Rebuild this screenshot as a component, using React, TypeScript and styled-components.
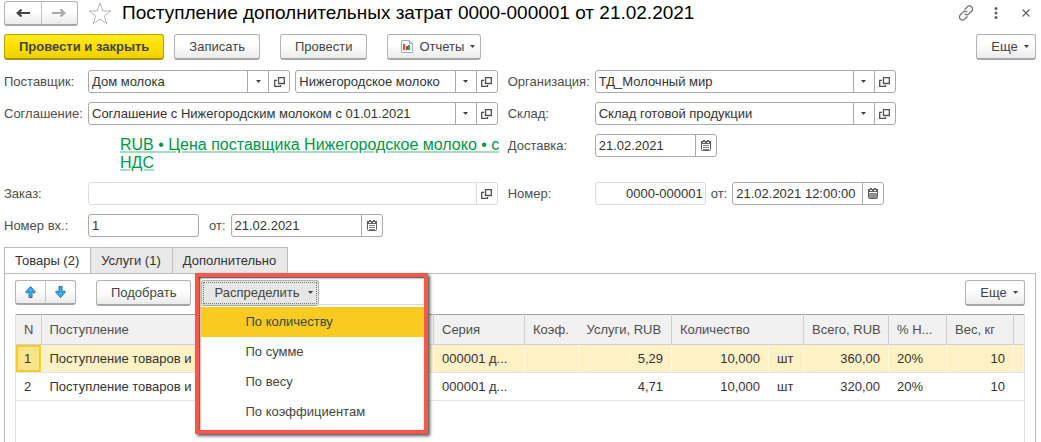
import React from "react";
import styled, { createGlobalStyle, css } from "styled-components";

const GlobalStyle = createGlobalStyle`
  *, *::before, *::after { box-sizing: border-box; }
  body {
    margin: 0;
    background: #fff;
    color: #333;
    font-family: "Liberation Sans", Arial, sans-serif;
    font-size: 13px;
    line-height: 16px;
  }
  button, input { font: inherit; color: inherit; margin: 0; }
`;

const Page = styled.main`
  display: flex;
  flex-direction: column;
  min-height: 100vh;
  padding: 0 5px 0 4px;
`;

const Header = styled.header`
  display: flex;
  align-items: center;
  height: 26px;
  margin-right: -5px;
`;

const raised = css`
  border: 1px solid #b3b3b3;
  border-bottom: 2px solid #a6a6a6;
  border-radius: 3px;
  background: linear-gradient(#fff 40%, #ebebeb);
`;

const SplitButton = styled.div<{ $wide?: boolean }>`
  ${raised}
  display: flex;
  flex: none;
  width: ${(p) => (p.$wide ? 74 : 61)}px;
  height: 25px;
  button {
    display: flex;
    flex: 1;
    align-items: center;
    justify-content: center;
    padding: 0;
    border: 0;
    background: none;
  }
  button + button { border-left: 1px solid #c4c4c4; }
`;

const IconButton = styled.button`
  display: flex;
  flex: none;
  align-items: center;
  justify-content: center;
  width: 30px;
  height: 24px;
  padding: 0;
  border: 0;
  background: none;
`;

const StarButton = styled(IconButton)`
  width: 44px;
`;

const Title = styled.h1`
  flex: 1;
  margin: 0;
  color: #000;
  font-size: 19px;
  font-weight: 400;
  line-height: 24px;
  white-space: nowrap;
`;

const CommandBar = styled.div`
  display: flex;
  gap: 20px;
  margin-top: 8px;
`;

const ButtonGroup = styled.div`
  display: flex;
  gap: 10px;
`;

const Spacer = styled.div`
  flex: 1;
`;

const Button = styled.button<{ $primary?: boolean; $pressed?: boolean }>`
  ${raised}
  display: flex;
  flex: none;
  align-items: center;
  justify-content: center;
  gap: 8px;
  height: 26px;
  padding: 0 14px;
  color: #444;
  white-space: nowrap;
  ${(p) =>
    p.$primary &&
    css`
      border-color: #b5a200;
      border-bottom-color: #a39200;
      background: linear-gradient(#ffe91f, #ffe000 50%, #edd000);
      font-weight: 700;
    `}
  ${(p) =>
    p.$pressed &&
    css`
      padding: 0 5px 0 12px;
      background: #e6e6e6;
      outline: 1px dotted #777;
      outline-offset: -3px;
    `}
`;

const MenuButton = styled(Button)`
  gap: 6px;
  padding: 0 5px 0 13px;
`;

const MoreButton = styled(MenuButton)`
  width: 60px;
`;

const Form = styled.form`
  display: grid;
  grid-template-columns: minmax(0, 56fr) minmax(0, 44fr);
  gap: 9px 10px;
  margin: 10px 0;
  padding-right: 13.6%;
`;

const FormRow = styled.div<{ $side?: "right" }>`
  display: flex;
  align-items: flex-start;
  gap: 5px;
  > :first-child { width: ${(p) => (p.$side === "right" ? 82 : 79)}px; }
`;

const Label = styled.label`
  flex: none;
  color: #4d4d4d;
  line-height: 23px;
  white-space: nowrap;
`;

const InnerLabel = styled(Label)`
  padding-left: 5px;
`;

const FieldBox = styled.div<{ $width?: number; $faint?: boolean }>`
  --line: ${(p) => (p.$faint ? "#dcdcdc" : "#a9a9a9")};
  display: flex;
  flex: ${(p) => (p.$width ? `0 0 ${p.$width}px` : "1 1 0")};
  min-width: 0;
  height: 23px;
  border: 1px solid var(--line);
  border-radius: 3px;
  background: #fff;
  input {
    flex: 1;
    min-width: 0;
    padding: 0 3px;
    border: 0;
    background: none;
    line-height: 16px;
  }
  button {
    display: flex;
    flex: none;
    align-items: center;
    justify-content: center;
    width: 21px;
    padding: 0;
    border: 0;
    border-left: 1px solid var(--line);
    background: none;
  }
`;

const NumberField = styled(FieldBox)`
  input { text-align: right; padding-right: 2px; }
`;

const TermsLink = styled.a`
  flex: 1;
  margin-left: 32px;
  margin-right: -4px;
  height: 39px;
  padding-top: 2px;
  color: #009646;
  font-size: 16px;
  line-height: 18px;
  text-decoration: underline;
  text-decoration-color: #a8dcbf;
  text-decoration-thickness: 2px;
  text-underline-offset: 1px;
`;

const Tabs = styled.div`
  display: flex;
  height: 27px;
  margin-bottom: -1px;
`;

const Tab = styled.button<{ $active?: boolean }>`
  padding: 0 11px 0 10px;
  border: 1px solid #bdbdbd;
  border-left-width: ${(p) => (p.$active ? 1 : 0)}px;
  border-bottom-color: ${(p) => (p.$active ? "#fff" : "#bdbdbd")};
  background: ${(p) => (p.$active ? "#fff" : "#e9e9e9")};
  white-space: nowrap;
`;

const Panel = styled.section`
  display: flex;
  flex: 1;
  flex-direction: column;
  padding: 6px 10px 0;
  border: 1px solid #bdbdbd;
  border-bottom: 0;
`;

const Toolbar = styled.div`
  display: flex;
  margin-bottom: 8px;
  gap: 20px;
`;

const MenuAnchor = styled.div`
  position: relative;
`;

const Frame = styled.div`
  position: absolute;
  z-index: 1;
  top: -7px;
  left: -6px;
  width: 233px;
  height: 161px;
  border: 4px solid #f9574a;
  background: #fff;
  box-shadow: 2px 2px 3px #555, inset 1px 1px 2px #333;
`;

const DistributeButton = styled(Button)`
  position: relative;
  z-index: 2;
`;

const Menu = styled.ul`
  position: absolute;
  z-index: 2;
  top: 24px;
  left: 0;
  width: 223px;
  margin: 0;
  padding: 2px 0 0;
  border-top: 1px solid #d8d8d8;
  list-style: none;
`;

const MenuItem = styled.button<{ $active?: boolean }>`
  display: block;
  width: 100%;
  height: 30px;
  padding: 0 0 0 44px;
  border: 0;
  background: ${(p) => (p.$active ? "#f9cb20" : "transparent")};
  color: #444;
  text-align: left;
`;

const TableArea = styled.div`
  flex: 1;
  border: 1px solid #e0e0e0;
  border-width: 0 1px;
`;

const Table = styled.table`
  width: 100%;
  border-collapse: collapse;
  table-layout: fixed;
`;

const HeadCell = styled.th<{ $noLine?: boolean }>`
  height: 30px;
  padding: 0 8px;
  overflow: hidden;
  border-top: 1px solid #a0a0a0;
  border-bottom: 1px solid #d0d0d0;
  border-right: ${(p) => (p.$noLine ? "0" : "1px solid #cfcfcf")};
  background: #f1f1f1;
  color: #4d4d4d;
  font-weight: 400;
  text-align: left;
  white-space: nowrap;
`;

const Row = styled.tr<{ $selected?: boolean }>`
  background: ${(p) => (p.$selected ? "#fdf1c5" : "#fff")};
  td { border-right: 1px solid ${(p) => (p.$selected ? "#fff9e4" : "#fff")}; }
`;

const Cell = styled.td<{ $right?: boolean; $current?: boolean }>`
  height: 28px;
  padding: 0 8px;
  overflow: hidden;
  border-bottom: 1px solid #e4e4e4;
  text-align: ${(p) => (p.$right ? "right" : "left")};
  white-space: nowrap;
  ${(p) =>
    p.$current &&
    css`
      background: #fde48c;
      box-shadow: inset 0 0 0 2px #f7cb2d;
    `}
`;

const Caret = () => (
  <svg width="5" height="3" viewBox="0 0 5 3" aria-hidden="true">
    <path d="M0 0h5L2.5 3z" fill="#444" />
  </svg>
);

const OpenIcon = () => (
  <svg width="11" height="10" viewBox="0 0 11 10" fill="none" stroke="#505050" strokeWidth="1.3" aria-hidden="true">
    <path d="M4.500 .7h5.800v5.800H4.500zM3 3.300H.700v6h5.800V8" />
  </svg>
);

const CalendarIcon = ({ filled }: { filled?: boolean }) => (
  <svg width="10" height="11" viewBox="0 0 10 11" aria-hidden="true">
    <rect x=".5" y="1.5" width="9" height="9" rx="1" fill="#fff" stroke="#606060" />
    <path d="M0 1h10v3H0zM2 0h2v2H2zM6 0h2v2H6z" fill="#606060" />
    <path d="M2 2.500h2M6 2.500h2" stroke="#fff" />
    {filled ? <path d="M1 5h8v5H1z" fill="#909090" /> : <path d="M2 5.5h6M2 7.5h6M2 9.5h6" stroke="#808080" />}
  </svg>
);

const NavArrow = ({ color, flip }: { color: string; flip?: boolean }) => (
  <svg width="14" height="8" viewBox="0 0 14 8" fill="none" stroke={color} strokeWidth="2.2" aria-hidden="true">
    <path d={flip ? "M0 4h12M8.500 .5L12.300 4 8.500 7.500" : "M14 4H2M5.500 .5L1.700 4l3.800 3.500"} />
  </svg>
);

const StarIcon = () => (
  <svg width="24" height="23" viewBox="0 0 24 23" fill="#fff" stroke="#b5b5b5" aria-hidden="true">
    <path d="M12 1l2.800 8H23l-6.600 4.900L18.900 22 12 17.100 5.100 22l2.500-8.100L1 9h8.200z" />
  </svg>
);

const LinkIcon = () => (
  <svg width="16" height="16" viewBox="0 0 16 16" fill="none" stroke="#707070" strokeWidth="1.300" strokeLinecap="round" aria-hidden="true">
    <path d="M7 4.200l2.300-2.300a2.900 2.900 0 0 1 4.300 0 2.900 2.900 0 0 1 0 4.300l-2.700 2.700a2.900 2.900 0 0 1-3.900.2" />
    <path d="M9 11.800l-2.300 2.300a2.900 2.900 0 0 1-4.300 0 2.900 2.900 0 0 1 0-4.300l2.700-2.700a2.900 2.900 0 0 1 3.900-.2" />
  </svg>
);

const DotsIcon = () => (
  <svg width="4" height="12" viewBox="0 0 4 12" fill="#606060" aria-hidden="true">
    <circle cx="2" cy="1.600" r="1.500" />
    <circle cx="2" cy="6" r="1.500" />
    <circle cx="2" cy="10.400" r="1.500" />
  </svg>
);

const CloseIcon = () => (
  <svg width="8" height="8" viewBox="0 0 8 8" stroke="#606060" strokeWidth="1.100" aria-hidden="true">
    <path d="M.5 .5l7 7M7.500 .5l-7 7" />
  </svg>
);

const ReportIcon = () => (
  <svg width="12" height="13" viewBox="0 0 12 13" aria-hidden="true">
    <path d="M.5 .5h8l3 3v9H.5z" fill="#fff" stroke="#9fb0bd" />
    <path d="M8.500 .5v3h3" fill="none" stroke="#9fb0bd" />
    <path d="M2 4h2v6H2z" fill="#e8452c" />
    <path d="M5 6h2v4H5z" fill="#d03a26" />
    <path d="M7 5h2v5H7z" fill="#32a852" />
  </svg>
);

const MoveArrow = ({ down }: { down?: boolean }) => (
  <svg width="11" height="12" viewBox="0 0 11 12" fill="#3fb0f0" stroke="#1b6ea8" strokeLinejoin="round" aria-hidden="true">
    <path
      d={
        down
          ? "M4 .5h3v6L9.200 4.800l1.200 1.300-4.900 5.300L.6 6.100l1.200-1.300L4 6.500z"
          : "M4 11.500h3v-6l2.200 1.700 1.200-1.300L5.500 .6 .6 5.900l1.200 1.300L4 5.500z"
      }
    />
  </svg>
);

type FieldProps = {
  id: string;
  value?: string;
  width?: number;
  faint?: boolean;
  select?: boolean;
  open?: boolean;
  calendar?: "lined" | "filled";
  label?: string;
};

const Field = ({ id, value = "", width, faint, select, open, calendar, label }: FieldProps) => (
  <FieldBox $width={width} $faint={faint}>
    <input id={id} defaultValue={value} aria-label={label} />
    {select && (
      <button type="button" aria-label="Выбрать">
        <Caret />
      </button>
    )}
    {open && (
      <button type="button" aria-label="Открыть">
        <OpenIcon />
      </button>
    )}
    {calendar && (
      <button type="button" aria-label="Календарь">
        <CalendarIcon filled={calendar === "filled"} />
      </button>
    )}
  </FieldBox>
);

const rows = [
  { n: 1, services: "5,29", total: "360,00" },
  { n: 2, services: "4,71", total: "320,00" },
];

const menuItems = ["По количеству", "По сумме", "По весу", "По коэффициентам"];

const columnWidths = [25, 0, 91, 54, 93, 97, 35, 85, 58, 67, 10];

export default function App() {
  return (
    <Page>
      <GlobalStyle />
      <Header>
        <SplitButton $wide>
          <button aria-label="Назад"><NavArrow color="#444" /></button>
          <button aria-label="Вперед"><NavArrow color="#aaa" flip /></button>
        </SplitButton>
        <StarButton aria-label="Избранное"><StarIcon /></StarButton>
        <Title>Поступление дополнительных затрат 0000-000001 от 21.02.2021</Title>
        <IconButton aria-label="Ссылка"><LinkIcon /></IconButton>
        <IconButton aria-label="Меню"><DotsIcon /></IconButton>
        <IconButton aria-label="Закрыть"><CloseIcon /></IconButton>
      </Header>

      <CommandBar>
        <ButtonGroup>
          <Button $primary>Провести и закрыть</Button>
          <Button>Записать</Button>
        </ButtonGroup>
        <Button>Провести</Button>
        <MenuButton>
          <ReportIcon />
          Отчеты
          <Caret />
        </MenuButton>
        <Spacer />
        <MoreButton>Еще <Caret /></MoreButton>
      </CommandBar>

      <Form>
        <FormRow>
          <Label htmlFor="supplier">Поставщик:</Label>
          <Field id="supplier" value="Дом молока" select open />
          <Field id="partner" label="Контрагент" value="Нижегородское молоко" select open />
        </FormRow>
        <FormRow $side="right">
          <Label htmlFor="company">Организация:</Label>
          <Field id="company" value="ТД_Молочный мир" select open />
        </FormRow>

        <FormRow>
          <Label htmlFor="agreement">Соглашение:</Label>
          <Field id="agreement" value="Соглашение с Нижегородским молоком с 01.01.2021" select open />
        </FormRow>
        <FormRow $side="right">
          <Label htmlFor="store">Склад:</Label>
          <Field id="store" value="Склад готовой продукции" select open />
        </FormRow>

        <FormRow>
          <Label as="span" />
          <TermsLink href="#terms">RUB • Цена поставщика Нижегородское молоко • с НДС</TermsLink>
        </FormRow>
        <FormRow $side="right">
          <Label htmlFor="delivery">Доставка:</Label>
          <Field id="delivery" value="21.02.2021" width={122} calendar="lined" />
        </FormRow>

        <FormRow>
          <Label htmlFor="order">Заказ:</Label>
          <Field id="order" faint open />
        </FormRow>
        <FormRow $side="right">
          <Label htmlFor="number">Номер:</Label>
          <NumberField $width={111} $faint>
            <input id="number" defaultValue="0000-000001" />
          </NumberField>
          <Label htmlFor="numberDate">от:</Label>
          <Field id="numberDate" value="21.02.2021 12:00:00" width={152} calendar="filled" />
        </FormRow>

        <FormRow>
          <Label htmlFor="incoming">Номер вх.:</Label>
          <Field id="incoming" value="1" width={111} />
          <InnerLabel htmlFor="incomingDate">от:</InnerLabel>
          <Field id="incomingDate" value="21.02.2021" width={152} calendar="lined" />
        </FormRow>
      </Form>

      <Tabs role="tablist">
        <Tab role="tab" aria-selected $active>Товары (2)</Tab>
        <Tab role="tab">Услуги (1)</Tab>
        <Tab role="tab">Дополнительно</Tab>
      </Tabs>

      <Panel>
        <Toolbar>
          <SplitButton>
            <button aria-label="Вверх"><MoveArrow /></button>
            <button aria-label="Вниз"><MoveArrow down /></button>
          </SplitButton>
          <ButtonGroup>
            <Button>Подобрать</Button>
            <MenuAnchor>
              <Frame />
              <DistributeButton $pressed aria-expanded>Распределить <Caret /></DistributeButton>
              <Menu>
                {menuItems.map((item, i) => (
                  <li key={item}>
                    <MenuItem $active={i === 0}>{item}</MenuItem>
                  </li>
                ))}
              </Menu>
            </MenuAnchor>
          </ButtonGroup>
          <Spacer />
          <MoreButton>Еще <Caret /></MoreButton>
        </Toolbar>

        <TableArea>
          <Table>
            <colgroup>
              {columnWidths.map((w, i) => (
                <col key={i} width={w || undefined} />
              ))}
            </colgroup>
            <thead>
              <tr>
                <HeadCell>N</HeadCell>
                <HeadCell>Поступление</HeadCell>
                <HeadCell>Серия</HeadCell>
                <HeadCell $noLine>Коэф.</HeadCell>
                <HeadCell>Услуги, RUB</HeadCell>
                <HeadCell colSpan={2}>Количество</HeadCell>
                <HeadCell>Всего, RUB</HeadCell>
                <HeadCell>% Н...</HeadCell>
                <HeadCell>Вес, кг</HeadCell>
                <HeadCell $noLine />
              </tr>
            </thead>
            <tbody>
              {rows.map((r, i) => (
                <Row key={r.n} $selected={i === 0}>
                  <Cell $current={i === 0}>{r.n}</Cell>
                  <Cell>Поступление товаров и услуг</Cell>
                  <Cell>000001 д...</Cell>
                  <Cell />
                  <Cell $right>{r.services}</Cell>
                  <Cell $right>10,000</Cell>
                  <Cell>шт</Cell>
                  <Cell $right>{r.total}</Cell>
                  <Cell>20%</Cell>
                  <Cell $right>10</Cell>
                  <Cell />
                </Row>
              ))}
            </tbody>
          </Table>
        </TableArea>
      </Panel>
    </Page>
  );
}
